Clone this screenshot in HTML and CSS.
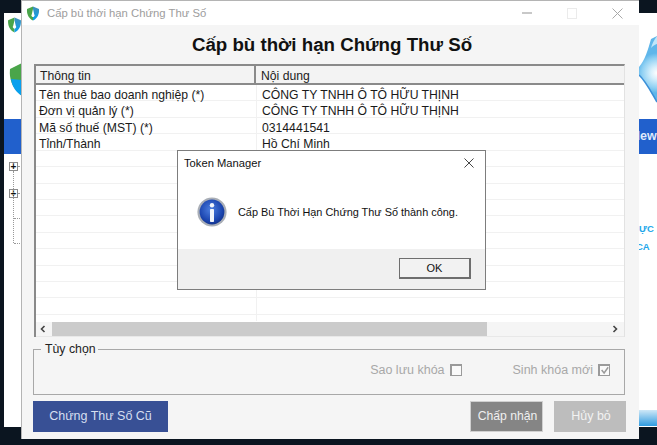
FILE: index.html
```html
<!DOCTYPE html>
<html lang="vi">
<head>
<meta charset="utf-8">
<title>Cấp bù thời hạn Chứng Thư Số</title>
<link rel="stylesheet" href="styles.css">
</head>
<body>
<div class="desktop">
  <svg width="0" height="0" class="defs">
    <defs>
      <linearGradient id="blueGrad" x1="0" y1="0" x2="0" y2="1"><stop offset="0" stop-color="#3f8fb8"/><stop offset="1" stop-color="#08a0ee"/></linearGradient>
      <radialGradient id="infoGrad" cx="0.45" cy="0.4" r="0.65"><stop offset="0" stop-color="#4d7fe0"/><stop offset="0.7" stop-color="#1c46b0"/><stop offset="1" stop-color="#0f2f86"/></radialGradient>
      <radialGradient id="swooshGrad" gradientUnits="userSpaceOnUse" cx="18" cy="37" r="20"><stop offset="0" stop-color="#ffffff"/><stop offset="0.3" stop-color="#d8f0fc"/><stop offset="0.75" stop-color="#8fd0f3"/><stop offset="1" stop-color="#5fb6ea"/></radialGradient>
      <symbol id="shield" viewBox="0 0 14 15">
        <path d="M7 0.5 L1 3 C0.6 8 2.5 12.5 7 14.5 Z" fill="#4aa54a"/>
        <path d="M7 0.5 L13 3 C13.4 8 11.5 12.5 7 14.5 Z" fill="url(#blueGrad)"/>
        <path d="M7 3 L8.2 8.2 A1.6 1.6 0 1 1 5.8 8.2 Z" fill="#fff"/>
      </symbol>
    </defs>
  </svg>

  <section class="back-window">
    <svg class="back-logo"><use href="#shield"/></svg>
    <svg class="back-shield" viewBox="0 0 13 34"><path d="M13 0 L1 6 C0 16 3 25 13 33 Z" fill="#4aa54a"/><path d="M13 17 L2 16 C3 24 7 29 13 33 Z" fill="#08a0ee"/></svg>
    <div class="back-band"></div>
    <div class="tree">
      <span class="node node-a">+</span>
      <span class="node node-b">+</span>
      <span class="tree-line"></span>
      <span class="tree-tick tick-a"></span>
      <span class="tree-tick tick-b"></span>
      <span class="tree-tick tick-c"></span>
      <span class="tree-tick tick-d"></span>
    </div>
    <svg class="back-swoosh" viewBox="0 0 18 76">
      <path d="M18 0 L12 3 C9 14 6 24 0 31 L0 39 C6 44 11 54 18 66 Z" fill="url(#swooshGrad)"/>
      <path d="M0 39 C6 44 11 54 18 66" fill="none" stroke="#3a8fd8" stroke-width="1.6"/>
      <path d="M18 0 C15 4 13 8 12 12 C15 9 17 8 18 8 Z" fill="#bfe6fa"/>
    </svg>
    <div class="back-new">New</div>
    <div class="back-text text-a">ỰC</div>
    <div class="back-text text-b">CA</div>
    <div class="back-fade"></div>
  </section>

  <main class="main-window">
    <header class="titlebar">
      <svg class="title-logo"><use href="#shield"/></svg>
      <span class="title-text">Cấp bù thời hạn Chứng Thư Số</span>
      <span class="win-controls">
        <span class="ctl ctl-min"></span>
        <span class="ctl ctl-max"></span>
        <svg class="ctl-close" viewBox="0 0 11 11"><path d="M0.5 0.5 L10.5 10.5 M10.5 0.5 L0.5 10.5" stroke="#a8a8a8" fill="none"/></svg>
      </span>
    </header>
    <div class="content">
      <h1 class="heading">Cấp bù thời hạn Chứng Thư Số</h1>
      <div class="grid-frame">
        <div class="grid-head">
          <div class="hcell hcell-a">Thông tin</div>
          <div class="hcell hcell-b">Nội dung</div>
        </div>
        <div class="grid-body">
          <div class="row"><div class="cell cell-a">Tên thuê bao doanh nghiệp (*)</div><div class="cell">CÔNG TY TNHH Ô TÔ HỮU THỊNH</div></div>
          <div class="row"><div class="cell cell-a">Đơn vị quản lý (*)</div><div class="cell">CÔNG TY TNHH Ô TÔ HỮU THỊNH</div></div>
          <div class="row"><div class="cell cell-a">Mã số thuế (MST) (*)</div><div class="cell">0314441541</div></div>
          <div class="row"><div class="cell cell-a">Tỉnh/Thành</div><div class="cell">Hồ Chí Minh</div></div>
          <div class="row"><div class="cell cell-a"></div><div class="cell"></div></div>
          <div class="row"><div class="cell cell-a"></div><div class="cell"></div></div>
          <div class="row"><div class="cell cell-a"></div><div class="cell"></div></div>
          <div class="row"><div class="cell cell-a"></div><div class="cell"></div></div>
          <div class="row"><div class="cell cell-a"></div><div class="cell"></div></div>
          <div class="row"><div class="cell cell-a"></div><div class="cell"></div></div>
          <div class="row"><div class="cell cell-a"></div><div class="cell"></div></div>
          <div class="row"><div class="cell cell-a"></div><div class="cell"></div></div>
          <div class="row"><div class="cell cell-a"></div><div class="cell"></div></div>
          <div class="row"><div class="cell cell-a"></div><div class="cell"></div></div>
          <div class="row-tail"><div class="cell cell-a"></div><div class="cell"></div></div>
        </div>
        <div class="scrollbar">
          <svg class="arrow" viewBox="0 0 6 8"><path d="M4.5 1 L1.5 4 L4.5 7" fill="none" stroke="#444" stroke-width="1.6"/></svg>
          <div class="thumb"></div>
          <svg class="arrow arrow-right" viewBox="0 0 6 8"><path d="M1.5 1 L4.5 4 L1.5 7" fill="none" stroke="#444" stroke-width="1.6"/></svg>
        </div>
      </div>
      <fieldset class="options">
        <legend class="options-legend">Tùy chọn</legend>
        <div class="opt-row">
          <span class="opt">Sao lưu khóa <span class="check"></span></span>
          <span class="opt">Sinh khóa mới <span class="check"><svg viewBox="0 0 11 11"><path d="M2 5 L5 8.5 L10 1.5" fill="none" stroke="#9a9a9a" stroke-width="1.8"/></svg></span></span>
        </div>
      </fieldset>
      <footer class="actions">
        <div class="btn btn-old">Chứng Thư Số Cũ</div>
        <div class="btn btn-ok">Chấp nhận</div>
        <div class="btn btn-cancel">Hủy bỏ</div>
      </footer>
    </div>
  </main>

  <aside class="dialog">
    <div class="dlg-title">
      <span>Token Manager</span>
      <svg class="dlg-close" viewBox="0 0 11 11"><path d="M0.5 0.5 L10.5 10.5 M10.5 0.5 L0.5 10.5" stroke="#333" fill="none"/></svg>
    </div>
    <div class="dlg-body">
      <svg class="info" viewBox="0 0 30 30">
        <circle cx="15" cy="15" r="14.6" fill="#a9aeb6"/>
        <circle cx="15" cy="15" r="12.4" fill="url(#infoGrad)"/>
        <circle cx="15" cy="8.2" r="2.2" fill="#f2f5fb"/>
        <rect x="13" y="12" width="4" height="13" rx="0.8" fill="#f2f5fb"/>
      </svg>
      <span class="dlg-msg">Cấp Bù Thời Hạn Chứng Thư Số thành công.</span>
    </div>
    <div class="dlg-foot">
      <div class="dlg-ok">OK</div>
    </div>
  </aside>
</div>
</body>
</html>
```
FILE: styles.css
```css
* { box-sizing: border-box; }
html, body { margin: 0; padding: 0; }
body { background: #0b1520; font-family: "Liberation Sans", Arial, sans-serif; }
.defs { position: absolute; }
.desktop { position: relative; width: 657px; height: 445px; overflow: hidden; background: #0b1520; }

.back-window { position: absolute; left: 4px; top: 13px; width: 653px; height: 414px; background: #fff; }
.back-logo { position: absolute; left: 3px; top: 4px; width: 15px; height: 16px; }
.back-shield { position: absolute; left: 5px; top: 50px; width: 13px; height: 34px; }
.back-band { position: absolute; left: 0; top: 106px; width: 18px; height: 35px; background: #2160cc; }
.node { position: absolute; left: 5px; width: 9px; height: 9px; border: 1px solid #8c8c8c; background: #fff; color: #111; font: bold 10px/7px "Liberation Sans", sans-serif; text-align: center; }
.node-a { top: 149px; }
.node-b { top: 176px; }
.tree-line { position: absolute; left: 9px; top: 158px; height: 72px; border-left: 1px dotted #999; }
.tree-tick { position: absolute; height: 0; border-top: 1px dotted #999; }
.tick-a { left: 14px; top: 153px; width: 4px; }
.tick-b { left: 14px; top: 180px; width: 4px; }
.tick-c { left: 10px; top: 205px; width: 8px; }
.tick-d { left: 10px; top: 230px; width: 8px; }
.back-swoosh { position: absolute; left: 635px; top: 23px; width: 18px; height: 76px; }
.back-new { position: absolute; left: 617px; top: 106px; width: 36px; height: 35px; padding-left: 10px; background: #2160cc; color: #dfe9fb; font: bold 12.5px/35px "Liberation Sans", sans-serif; white-space: nowrap; }
.back-text { position: absolute; color: #23a7ea; font: bold 9.5px/12px "Liberation Sans", sans-serif; white-space: nowrap; }
.text-a { left: 635px; top: 210px; }
.text-b { left: 632px; top: 228px; }
.back-fade { position: absolute; left: 635px; top: 397px; width: 18px; height: 16px; background: linear-gradient(#cfe8f7, #2f9be0); }

.main-window { position: absolute; left: 21px; top: 0; width: 618px; height: 439px; background: #f5f5f5; border: 1px solid #b4b4b4; border-width: 1px 0 0 1px; display: flex; flex-direction: column; }
.titlebar { height: 24px; flex: none; display: flex; align-items: center; background: #fff; padding-left: 4px; }
.title-logo { width: 14px; height: 15px; flex: none; }
.title-text { margin-left: 7px; font-size: 11.3px; color: #9d9d9d; white-space: nowrap; }
.win-controls { margin-left: auto; display: flex; align-items: center; }
.ctl { display: block; }
.ctl-min { width: 10px; height: 1px; border-top: 2px solid #c8c8c8; margin-right: 35px; }
.ctl-max { width: 10px; height: 11px; border: 1px solid #ebebeb; margin-right: 35px; }
.ctl-close { width: 11px; height: 11px; margin-right: 16px; }

.content { flex: 1; display: flex; flex-direction: column; padding: 0 14px 7px 11px; }
.heading { margin: 8px 0 0 0; height: 31px; font-size: 18.7px; line-height: 24px; font-weight: bold; color: #111; text-align: center; padding-left: 6px; }
.grid-frame { height: 273px; background: #fff; border-top: 2px solid #8a8a8a; border-left: 2px solid #8a8a8a; border-right: 1px solid #e2e2e2; margin-left: 1px; display: flex; flex-direction: column; flex: none; }
.grid-head { height: 19px; flex: none; display: flex; background: #f3f3f3; border-bottom: 2px solid #8a8a8a; font-size: 12.2px; color: #222; }
.hcell { line-height: 17px; padding-top: 2px; }
.hcell-a { width: 220px; padding-left: 4px; border-right: 2px solid #8a8a8a; }
.hcell-b { flex: 1; padding-left: 5px; }
.grid-body { flex: 1; font-size: 12.2px; color: #1a1a1a; }
.row { height: 16.43px; display: flex; border-bottom: 1px solid #f1f1f1; }
.row-tail { height: 6px; display: flex; }
.cell { flex: 1; padding: 3px 0 0 5px; line-height: 15px; white-space: nowrap; }
.cell-a { flex: none; width: 221px; padding-left: 3px; border-right: 1px solid #f1f1f1; }
.scrollbar { height: 15px; flex: none; display: flex; align-items: center; background: #f5f5f5; border-bottom: 1px solid #e8e8e8; }
.arrow { width: 6px; height: 8px; margin: 0 6px 0 4px; flex: none; }
.thumb { width: 435px; height: 14px; background: #cbcbcb; }
.arrow-right { margin: 0 6px 0 auto; }

.options { margin: 5px 0 0 0; padding: 0 14px 0 11px; height: 53px; border: 1px solid #a8a8a8; min-width: 0; }
.options-legend { font-size: 12.3px; color: #222; padding: 0 2px 0 4px; margin-left: -4px; line-height: 14px; }
.opt-row { display: flex; justify-content: flex-end; gap: 51px; margin-top: 7px; }
.opt { display: flex; align-items: center; gap: 5px; font-size: 12.5px; color: #a8a8a8; white-space: nowrap; }
.check { display: block; width: 12px; height: 12px; border: 1px solid #9a9a9a; border-width: 2px 1px 1px 2px; background: #fafafa; }
.check svg { display: block; width: 9px; height: 9px; }

.actions { display: flex; margin-top: 6px; height: 31px; }
.btn { height: 31px; font-size: 12.5px; line-height: 31px; text-align: center; white-space: nowrap; }
.btn-old { width: 135px; background: #385095; color: #d6dff0; margin-right: auto; }
.btn-ok { width: 73px; background: #858585; color: #f0f0f0; border: 1px solid #d0d0d0; line-height: 29px; padding-left: 2px; font-size: 12.2px; }
.btn-cancel { width: 72px; margin-left: 11px; margin-right: -1px; background: #bdbdbd; color: #f2f2f2; padding-left: 2px; }

.dialog { position: absolute; left: 177px; top: 150px; width: 309px; height: 140px; background: #fff; border: 1px solid #7d7d7d; display: flex; flex-direction: column; }
.dlg-title { height: 24px; flex: none; display: flex; align-items: center; justify-content: space-between; padding: 0 11px 0 6px; font-size: 11.2px; color: #111; }
.dlg-close { width: 10px; height: 10px; }
.dlg-body { flex: 1; display: flex; align-items: center; padding-left: 19px; }
.info { width: 30px; height: 30px; flex: none; }
.dlg-msg { margin-left: 11px; font-size: 10.9px; color: #111; white-space: nowrap; }
.dlg-foot { height: 40px; flex: none; background: #f0f0f0; padding: 9px 14px 0 0; display: flex; justify-content: flex-end; align-items: flex-start; }
.dlg-ok { width: 72px; height: 21px; background: #f2f2f2; border: 2px solid #6e6e6e; border-width: 1px 2px 2px 1px; font-size: 11px; line-height: 19px; text-align: center; color: #111; }
```
